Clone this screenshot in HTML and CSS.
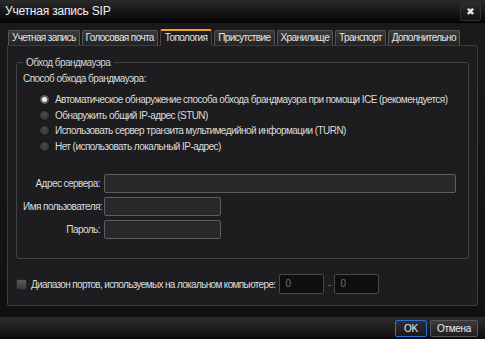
FILE: index.html
```html
<!DOCTYPE html>
<html lang="ru">
<head>
  <meta charset="UTF-8">
  <title>Учетная запись SIP</title>
  <link rel="stylesheet" href="styles.css">
</head>
<body>
  <div class="dialog">
    <!-- Title bar -->
    <div class="titlebar">
      <span class="title">Учетная запись SIP</span>
      <button class="close-btn">&#10006;</button>
    </div>

    <div class="content">
      <div class="tabs">
        <div class="tab">Учетная запись</div>
        <div class="tab">Голосовая почта</div>
        <div class="tab active">Топология</div>
        <div class="tab">Присутствие</div>
        <div class="tab">Хранилище</div>
        <div class="tab">Транспорт</div>
        <div class="tab">Дополнительно</div>
      </div>

      <div class="panel">
        <fieldset class="group">
          <legend>Обход брандмауэра</legend>
          <div class="group-label">Способ обхода брандмауэра:</div>
          <div class="radios">
            <label class="radio"><span class="dot checked"></span>Автоматическое обнаружение способа обхода брандмауэра при помощи ICE (рекомендуется)</label>
            <label class="radio"><span class="dot"></span>Обнаружить общий IP-адрес (STUN)</label>
            <label class="radio"><span class="dot"></span>Использовать сервер транзита мультимедийной информации (TURN)</label>
            <label class="radio"><span class="dot"></span>Нет (использовать локальный IP-адрес)</label>
          </div>
          <div class="fields">
            <span class="field-label">Адрес сервера:</span>
            <span class="input wide"></span>
            <span class="field-label">Имя пользователя:</span>
            <span class="input short"></span>
            <span class="field-label">Пароль:</span>
            <span class="input short"></span>
          </div>
        </fieldset>

        <div class="ports">
          <span class="checkbox"></span>
          <span class="ports-label">Диапазон портов, используемых на локальном компьютере:</span>
          <span class="input port">0</span>
          <span class="dash">-</span>
          <span class="input port">0</span>
        </div>
      </div>
    </div>

    <div class="footer">
      <button class="btn ok">OK</button>
      <button class="btn">Отмена</button>
    </div>
  </div>
</body>
</html>
```

FILE: styles.css
```css
/* General */
html, body {
  margin: 0;
  height: 100%;
}

body {
  background-color: #0c0c0c;
  font-family: 'Liberation Sans', Arial, sans-serif;
  font-size: 10px;
  letter-spacing: -0.55px;
  color: #dcdcdc;
}

.dialog {
  width: 485px;
  height: 339px;
  display: flex;
  flex-direction: column;
  background-color: #141415;
}

/* Title bar */
.titlebar {
  height: 22px;
  flex-shrink: 0;
  display: flex;
  align-items: center;
  justify-content: space-between;
  padding: 0 4px 0 5px;
  background: linear-gradient(#2a2a2a, #060606);
  border-bottom: 1px solid #000;
}

.title {
  color: #f0f0f0;
  font-size: 12px;
  letter-spacing: -0.2px;
}

.close-btn {
  width: 21px;
  height: 19px;
  padding: 0;
  border: 1px solid #303030;
  border-radius: 2px;
  background: linear-gradient(#2c2c2c, #111);
  color: #e8e8e8;
  font-size: 10px;
  font-family: 'DejaVu Sans', sans-serif;
  line-height: 17px;
}

/* Tabs + panel */
.content {
  flex: 1;
  padding: 5px 7px 11px 7px;
  display: flex;
  flex-direction: column;
  background: linear-gradient(#1a1a1b, #101011);
}

.tabs {
  display: flex;
  gap: 2px;
  padding-left: 1px;
  height: 17px;
  align-items: flex-end;
}

.tab {
  flex-shrink: 0;
  white-space: nowrap;
  height: 14px;
  line-height: 14px;
  padding: 0 3px;
  background: linear-gradient(#3a3a3b, #232324);
  border: 1px solid #555;
  border-bottom: none;
  border-radius: 2px 2px 0 0;
  color: #e6e6e6;
  letter-spacing: -0.6px;
}

.tab.active {
  height: 15px;
  padding: 0 4px;
  background: #1e1e20;
  border-color: #444;
  border-top: 2px solid #f0a21e;
  position: relative;
  z-index: 1;
  margin-bottom: -1px;
}

.panel {
  flex: 1;
  background-color: #1d1d1f;
  border: 1px solid #3c3c3e;
  border-radius: 0 2px 2px 2px;
  padding: 11px 8px 0 8px;
}

/* Group box */
.group {
  margin: 0;
  border: 1px solid #444446;
  border-radius: 3px;
  padding: 2px 0 0 6px;
  height: 202px;
  box-sizing: border-box;
}

.group legend {
  padding: 0 4px 0 3px;
  color: #d6d6d6;
}

.group-label {
  margin-top: 3px;
}

.radios {
  display: flex;
  flex-direction: column;
  gap: 2px;
  margin: 9px 0 0 16px;
}

.radio {
  display: flex;
  align-items: center;
  height: 13.5px;
  gap: 5px;
  white-space: nowrap;
}

.dot {
  flex-shrink: 0;
  width: 11px;
  height: 11px;
  border-radius: 50%;
  background: radial-gradient(circle at 50% 40%, #4c4c4e, #2c2c2e);
  border: 1px solid #151515;
  box-sizing: border-box;
}

.dot.checked {
  background: radial-gradient(circle, #ececec 0 2px, #6a6a6c 3px, #3c3c3e);
}

.fields {
  display: grid;
  grid-template-columns: 77px auto;
  column-gap: 4px;
  row-gap: 4px;
  align-items: center;
  margin-top: 21px;
  white-space: nowrap;
}

.field-label {
  text-align: right;
}

.input {
  display: block;
  height: 19px;
  box-sizing: border-box;
  background-color: #28282b;
  border: 1px solid #5e5e60;
  border-radius: 2px;
}

.input.wide {
  width: 352px;
}

.input.short {
  width: 117px;
}

/* Ports */
.ports {
  display: flex;
  align-items: center;
  margin-top: 15px;
  white-space: nowrap;
}

.checkbox {
  width: 11px;
  height: 11px;
  border: 1px solid #252525;
  border-radius: 2px;
  background: linear-gradient(#5c5c5e, #3a3a3c);
  box-sizing: border-box;
  margin-right: 4px;
}

.ports-label {
  margin-right: 4px;
  letter-spacing: -0.65px;
}

.input.port {
  width: 45px;
  height: 20px;
  background-color: #0e0e0f;
  border-color: #48484a;
  color: #707070;
  padding-left: 5px;
  line-height: 18px;
}

.dash {
  color: #777;
  width: 10px;
  text-align: center;
}

/* Footer */
.footer {
  height: 22px;
  flex-shrink: 0;
  display: flex;
  justify-content: flex-end;
  align-items: center;
  gap: 3px;
  padding: 0 7px 0 3px;
  background: linear-gradient(#2e2e30, #0c0c0c);
}

.btn {
  height: 17px;
  padding: 0 6px;
  font-family: 'Liberation Sans', Arial, sans-serif;
  font-size: 10px;
  letter-spacing: -0.3px;
  color: #ececec;
  background: linear-gradient(#3c3c3e, #1e1e20);
  border: 1px solid #58585a;
  border-radius: 2px;
}

.btn.ok {
  width: 32px;
  border-color: #2f6fd0;
  background: linear-gradient(#303034, #18181a);
}
```
